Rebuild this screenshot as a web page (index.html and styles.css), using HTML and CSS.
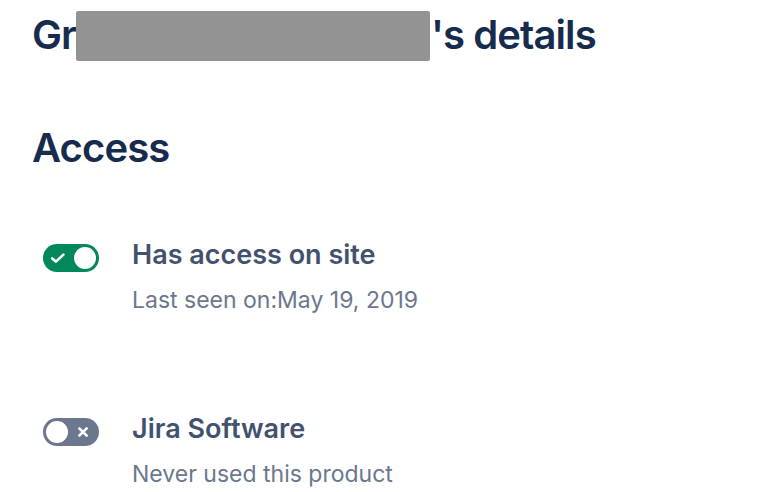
FILE: index.html
```html
<!DOCTYPE html>
<html lang="en">
<head>
<meta charset="utf-8">
<title>User details</title>
<link rel="stylesheet" href="styles.css">
</head>
<body>
<main class="page">
  <h1 class="title">Gr<span class="redacted" aria-hidden="true"></span>'s details</h1>
  <h2 class="section">Access</h2>
  <ul class="access-list">
    <li class="access-row">
      <span class="toggle toggle-on">
        <svg class="toggle-icon" width="18" height="18" viewBox="0 0 18 18"><path d="M3.2 9.4 6.9 12.6 14.4 5.6" fill="none" stroke="#fff" stroke-width="2.6" stroke-linecap="round" stroke-linejoin="round"/></svg>
        <span class="knob"></span>
      </span>
      <div class="access-text">
        <div class="access-name">Has access on site</div>
        <div class="access-meta">Last seen on:May 19, 2019</div>
      </div>
    </li>
    <li class="access-row access-row-next">
      <span class="toggle toggle-off">
        <span class="knob"></span>
        <svg class="toggle-icon" width="16" height="16" viewBox="0 0 16 16"><path d="M4.3 4.3 11.7 11.7M11.7 4.3 4.3 11.7" fill="none" stroke="#fff" stroke-width="2.6" stroke-linecap="round"/></svg>
      </span>
      <div class="access-text">
        <div class="access-name">Jira Software</div>
        <div class="access-meta">Never used this product</div>
      </div>
    </li>
  </ul>
</main>
</body>
</html>
```

FILE: styles.css
```css
html, body {
  margin: 0;
  padding: 0;
  background: #ffffff;
}

body {
  font-family: Inter, "Liberation Sans", Arial, sans-serif;
  overflow: hidden;
}

.page {
  padding: 11px 0 0 32px;
}

.title {
  margin: 0;
  font-size: 40px;
  line-height: 48px;
  font-weight: 600;
  color: #172B4D;
  letter-spacing: -0.9px;
  white-space: nowrap;
}

.redacted {
  display: inline-block;
  width: 354px;
  height: 50px;
  margin-left: 0;
  margin-right: 1px;
  vertical-align: -12px;
  background: #939393;
  border-radius: 2px;
}

.section {
  margin: 63px 0 0 0;
  font-size: 40px;
  line-height: 48px;
  font-weight: 600;
  color: #172B4D;
  letter-spacing: -0.9px;
}

.access-list {
  list-style: none;
  margin: 67px 0 0 0;
  padding: 0 0 0 11px;
}

.access-row {
  display: flex;
  align-items: flex-start;
  gap: 33px;
}

.access-row-next {
  margin-top: 99px;
}

.toggle {
  box-sizing: border-box;
  flex: none;
  width: 56px;
  height: 28px;
  margin-top: 5px;
  padding: 3px;
  border-radius: 14px;
  display: flex;
  align-items: center;
  justify-content: space-between;
}

.toggle-on {
  background: #00875A;
  padding-left: 6px;
}

.toggle-off {
  background: #6B778C;
  padding-right: 8px;
}

.knob {
  width: 22px;
  height: 22px;
  border-radius: 50%;
  background: #ffffff;
}

.toggle-icon {
  display: block;
}

.access-name {
  font-size: 27px;
  line-height: 32px;
  font-weight: 600;
  color: #42526E;
}

.access-meta {
  margin-top: 15px;
  font-size: 23px;
  line-height: 28px;
  color: #6B778C;
}
```
